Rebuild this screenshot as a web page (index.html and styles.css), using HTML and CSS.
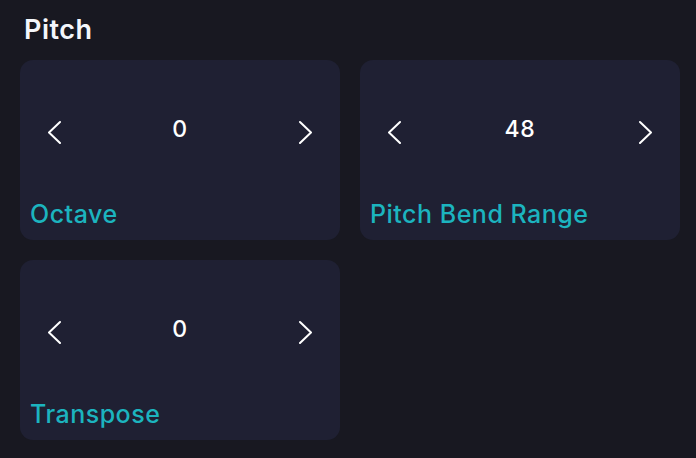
FILE: index.html
```html
<!DOCTYPE html>
<html>
<head>
<meta charset="utf-8">
<link rel="stylesheet" href="styles.css">
</head>
<body>
<section class="panel">
  <h2 class="title">Pitch</h2>
  <div class="grid">
    <div class="card">
      <div class="control">
        <svg class="chev" viewBox="0 0 14 24"><polyline points="12,2 1,12.5 12,23"/></svg>
        <span class="value">0</span>
        <svg class="chev" viewBox="0 0 14 24"><polyline points="2,2 13,12.5 2,23"/></svg>
      </div>
      <div class="label">Octave</div>
    </div>
    <div class="card">
      <div class="control">
        <svg class="chev" viewBox="0 0 14 24"><polyline points="12,2 1,12.5 12,23"/></svg>
        <span class="value">48</span>
        <svg class="chev" viewBox="0 0 14 24"><polyline points="2,2 13,12.5 2,23"/></svg>
      </div>
      <div class="label">Pitch Bend Range</div>
    </div>
    <div class="card">
      <div class="control">
        <svg class="chev" viewBox="0 0 14 24"><polyline points="12,2 1,12.5 12,23"/></svg>
        <span class="value">0</span>
        <svg class="chev" viewBox="0 0 14 24"><polyline points="2,2 13,12.5 2,23"/></svg>
      </div>
      <div class="label">Transpose</div>
    </div>
  </div>
</section>
</body>
</html>
```

FILE: styles.css
```css
html, body {
  margin: 0;
  padding: 0;
  background: #181821;
  font-family: "Inter", "Open Sans", sans-serif;
  color: #ffffff;
}
.panel {
  padding: 13px 16px 0 20px;
}
.title {
  margin: 0 0 13px 4px;
  font-size: 27px;
  line-height: 34px;
  font-weight: 600;
  letter-spacing: 0.5px;
  color: #f4f6fb;
}
.grid {
  display: grid;
  grid-template-columns: 320px 320px;
  gap: 20px;
}
.card {
  height: 180px;
  box-sizing: border-box;
  background: #1f2033;
  border-radius: 13px;
  display: flex;
  flex-direction: column;
  padding: 0 10px 0 10px;
}
.control {
  height: 60px;
  margin-top: 42px;
  display: flex;
  align-items: center;
  justify-content: space-between;
  padding: 0 18px 0 18px;
}
.chev {
  width: 14px;
  height: 24px;
  fill: none;
  stroke: #ffffff;
  stroke-width: 2;
  stroke-linecap: round;
  stroke-linejoin: round;
}
.value {
  font-size: 23px;
  line-height: 30px;
  font-weight: 500;
  letter-spacing: 0.6px;
  color: #ffffff;
  margin-top: -6px;
}
.label {
  margin-top: auto;
  margin-bottom: 11px;
  font-size: 25px;
  line-height: 30px;
  font-weight: 500;
  letter-spacing: 0.5px;
  color: #1cb4bf;
}
```
